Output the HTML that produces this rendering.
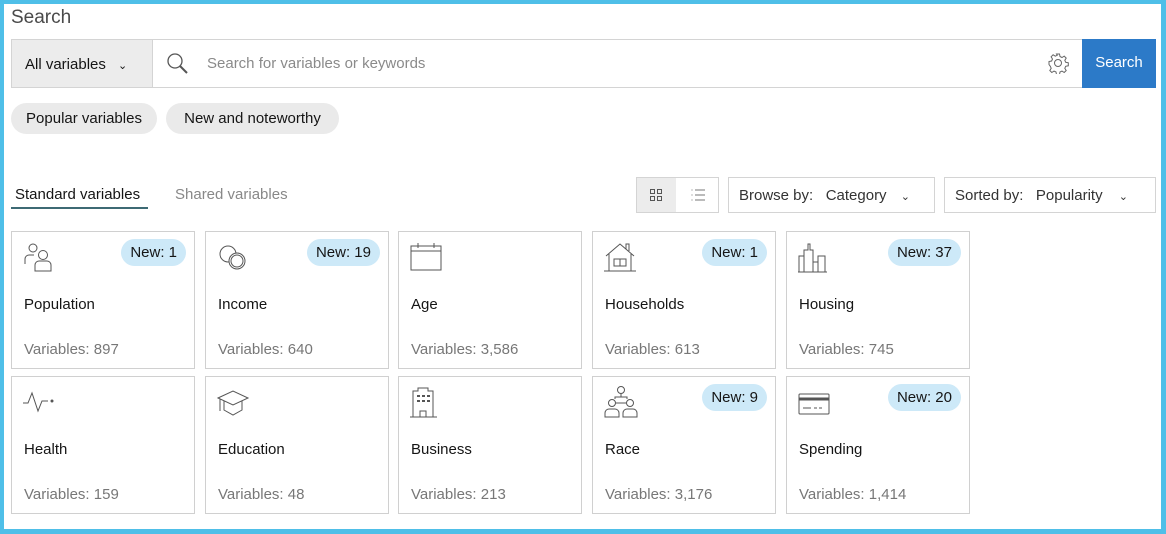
<!DOCTYPE html>
<html><head><meta charset="utf-8"><style>
*{box-sizing:border-box;margin:0;padding:0}
body{width:1166px;height:534px;background:#fff;font-family:"Liberation Sans",sans-serif;color:#151515;position:relative;overflow:hidden}
.frame{position:absolute;left:0;top:0;width:1166px;height:534px;border:4px solid #4fbfe8;border-right-width:5px;border-bottom-width:5px}
.a{position:absolute}
.title{left:11px;top:7px;font-size:19px;color:#4a4a4a}
.bar{left:11px;top:39px;width:1145px;height:49px;border:1px solid #d4d4d4}
.sel{left:11px;top:39px;width:142px;height:49px;background:#ececec;border:1px solid #d4d4d4;font-size:15px;padding:16px 0 0 13px}
.ph{left:207px;top:55px;font-size:15px;color:#8a8a8a}
.btn{left:1082px;top:39px;width:74px;height:49px;background:#2c7ac8;color:#fff;font-size:15px;text-align:center;padding-top:15px}
.chip{top:103px;height:31px;background:#eaeaea;border-radius:16px;font-size:15px;padding:7px 0 0;text-align:center}
.tab{top:186px;font-size:15px}
.ul{left:11px;top:207px;width:137px;height:2px;background:#3d6a74}
.box{border:1px solid #d4d4d4;height:36px;top:177px}
.dd{font-size:15px;color:#333;padding:9px 0 0 10px}
.card{width:184px;height:138px;border:1px solid #d0d0d0}
.card .nm{position:absolute;left:12px;top:64px;font-size:15px}
.card .vc{position:absolute;left:12px;top:109px;font-size:15px;color:#777}
.card .bd{position:absolute;right:8px;top:7px;height:27px;border-radius:14px;background:#cde9f8;font-size:15px;padding:5px 9px 0}
.card svg{position:absolute;left:10px;top:8px}
</style></head><body>
<div class="frame"></div>
<div class="a title">Search</div>
<div class="a bar"></div>
<div class="a sel">All variables <span style="font-size:11px;margin-left:8px">&#8964;</span></div>
<svg class="a" style="left:166px;top:52px" width="24" height="24" viewBox="0 0 24 24" fill="none" stroke="#555" stroke-width="1.3"><circle cx="9" cy="9" r="7"/><path d="M14 14l7 7" stroke-width="2"/></svg>
<div class="a ph">Search for variables or keywords</div>
<svg class="a" style="left:1047px;top:52px" width="22" height="22" viewBox="0 0 22 22" fill="none" stroke="#666" stroke-width="1"><circle cx="11" cy="11" r="3.5"/><path d="M9.5 2h3l.5 2.5 2 1 2.2-1.4 2 2-1.4 2.2.9 2 2.6.5v3l-2.6.5-.9 2 1.4 2.2-2 2-2.2-1.4-2 .9-.5 2.6h-3l-.5-2.6-2-.9-2.2 1.4-2-2 1.4-2.2-.9-2L2 12.5v-3l2.6-.5.9-2-1.4-2.2 2-2 2.2 1.4 2-1z"/></svg>
<div class="a btn">Search</div>
<div class="a chip" style="left:11px;width:146px">Popular variables</div>
<div class="a chip" style="left:166px;width:173px">New and noteworthy</div>
<div class="a tab" style="left:15px">Standard variables</div>
<div class="a tab" style="left:175px;color:#888">Shared variables</div>
<div class="a ul"></div>
<div class="a box" style="left:636px;width:83px"></div>
<div class="a" style="left:637px;top:178px;width:39px;height:34px;background:#ececec"></div>
<svg class="a" style="left:649px;top:188px" width="14" height="14" viewBox="0 0 14 14" fill="none" stroke="#555"><rect x="1.5" y="1.5" width="4" height="4"/><rect x="8.5" y="1.5" width="4" height="4"/><rect x="1.5" y="8.5" width="4" height="4"/><rect x="8.5" y="8.5" width="4" height="4"/></svg>
<svg class="a" style="left:690px;top:187px" width="16" height="16" viewBox="0 0 16 16" fill="none" stroke="#777"><path d="M5 3h10M5 8h10M5 13h10M1.5 3h1M1.5 8h1M1.5 13h1"/></svg>
<div class="a box dd" style="left:728px;width:207px">Browse by:&nbsp;&nbsp; Category <span style="font-size:11px;margin-left:10px">&#8964;</span></div>
<div class="a box dd" style="left:944px;width:212px">Sorted by:&nbsp;&nbsp; Popularity <span style="font-size:11px;margin-left:12px">&#8964;</span></div>

<div class="a card" style="left:11px;top:231px"><svg width="34" height="34" viewBox="0 0 34 34" fill="none" stroke="#555"><circle cx="11" cy="8" r="4"/><path d="M3 24v-5a4 4 0 014-4h5"/><circle cx="21" cy="15" r="4.5"/><path d="M13 31v-6a4 4 0 014-4h8a4 4 0 014 4v6z"/></svg><div class="bd">New: 1</div><div class="nm">Population</div><div class="vc">Variables: 897</div></div>
<div class="a card" style="left:205px;top:231px"><svg width="34" height="34" viewBox="0 0 34 34" fill="none" stroke="#555"><circle cx="12" cy="14" r="8"/><circle cx="21" cy="21" r="8" fill="#fff"/><circle cx="21" cy="21" r="6"/></svg><div class="bd">New: 19</div><div class="nm">Income</div><div class="vc">Variables: 640</div></div>
<div class="a card" style="left:398px;top:231px"><svg width="34" height="34" viewBox="0 0 34 34" fill="none" stroke="#555"><rect x="2" y="6" width="30" height="24"/><path d="M2 11h30M9 3v5M25 3v5"/></svg><div class="nm">Age</div><div class="vc">Variables: 3,586</div></div>
<div class="a card" style="left:592px;top:231px"><svg width="34" height="34" viewBox="0 0 34 34" fill="none" stroke="#555"><path d="M3 16L17 4l14 12M6 14v17h22V14M23 9V4h3v7M1 31h32"/><rect x="11" y="19" width="12" height="7"/><path d="M17 19v7"/></svg><div class="bd">New: 1</div><div class="nm">Households</div><div class="vc">Variables: 613</div></div>
<div class="a card" style="left:786px;top:231px"><svg width="34" height="34" viewBox="0 0 34 34" fill="none" stroke="#555"><path d="M2 32V16h5M7 32V10h4V4h2v6h3v22M16 32V22h5v10M21 32V16h7v16M1 32h29"/></svg><div class="bd">New: 37</div><div class="nm">Housing</div><div class="vc">Variables: 745</div></div>

<div class="a card" style="left:11px;top:376px"><svg width="34" height="34" viewBox="0 0 34 34" fill="none" stroke="#555"><path d="M1 18h5l4-10 6 18 4-10h6"/><circle cx="30" cy="16" r="1" fill="#555"/></svg><div class="nm">Health</div><div class="vc">Variables: 159</div></div>
<div class="a card" style="left:205px;top:376px"><svg width="34" height="34" viewBox="0 0 34 34" fill="none" stroke="#555"><path d="M2 13l15-7 15 7-15 7zM8 16v9l9 5 9-5v-9M4 14v12"/></svg><div class="nm">Education</div><div class="vc">Variables: 48</div></div>
<div class="a card" style="left:398px;top:376px"><svg width="34" height="34" viewBox="0 0 34 34" fill="none" stroke="#555"><path d="M4 32V6h5V3h10v3h5v26M1 32h27M11 32v-6h6v6"/><path d="M8 11h3M13 11h3M18 11h3M8 16h3M13 16h3M18 16h3" stroke-width="2"/></svg><div class="nm">Business</div><div class="vc">Variables: 213</div></div>
<div class="a card" style="left:592px;top:376px"><svg width="36" height="34" viewBox="0 0 36 34" fill="none" stroke="#555"><circle cx="18" cy="5" r="3.5"/><path d="M18 9v3M12 14v-2h12v2"/><circle cx="9" cy="18" r="3.5"/><circle cx="27" cy="18" r="3.5"/><path d="M13 18h10M2 32v-4a4 4 0 014-4h6a4 4 0 014 4v4zM20 32v-4a4 4 0 014-4h6a4 4 0 014 4v4z"/></svg><div class="bd">New: 9</div><div class="nm">Race</div><div class="vc">Variables: 3,176</div></div>
<div class="a card" style="left:786px;top:376px"><svg width="34" height="34" viewBox="0 0 34 34" fill="none" stroke="#555"><rect x="2" y="9" width="30" height="20" rx="1"/><path d="M2 14h30" stroke-width="3"/><path d="M6 23h8M17 23h3M22 23h3"/></svg><div class="bd">New: 20</div><div class="nm">Spending</div><div class="vc">Variables: 1,414</div></div>
</body></html>
